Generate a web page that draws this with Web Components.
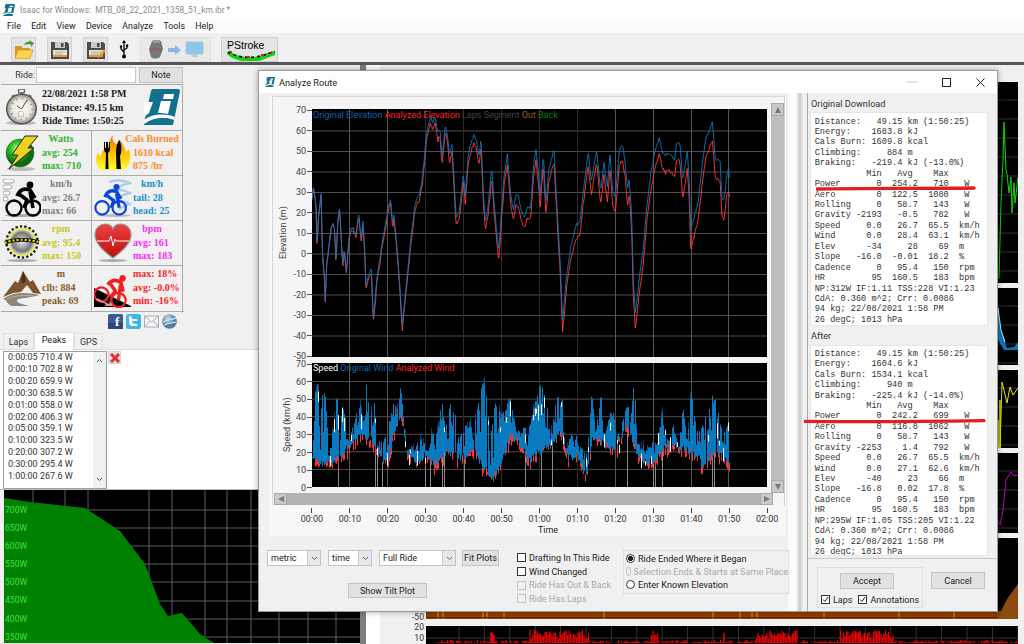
<!DOCTYPE html>
<html>
<head>
<meta charset="utf-8">
<title>Isaac for Windows</title>
<style>
  html, body { margin: 0; padding: 0; background: #f0f0f0; }
</style>
</head>
<body>
<isaac-app></isaac-app>
<script>
const rng = (seed) => () => (seed = (seed * 16807) % 2147483647) / 2147483647;

function lerpTable(pts, x) {
  for (let i = 1; i < pts.length; i++) {
    if (x <= pts[i][0]) {
      const a = pts[i - 1], b = pts[i];
      return a[1] + (b[1] - a[1]) * (x - a[0]) / ((b[0] - a[0]) || 1);
    }
  }
  return pts[pts.length - 1][1];
}

const LOGO = (w, h) => `<svg width="${w}" height="${h}" viewBox="0 0 36 36">
  <path d="M9 0H34Q36 0 36 2L29 36H1Q-1 36 0 34L7 2Q7.5 0 9 0Z" fill="#13708f"/>
  <path d="M20 5H30L29 10H19Z" fill="#fff"/>
  <path d="M17 12H27L24 25C21 24 18 24 14 24Z" fill="#fff"/>
  <path d="M0 31C8 25 20 24 31 28L30 31C20 27 10 28 0 35Z" fill="#fff"/>
  <path d="M0 13H9L5 24L0 28Z" fill="#fff"/>
</svg>`;

class TitleBar extends HTMLElement {
  constructor() {
    super();
    this.attachShadow({ mode: 'open' });
    this.shadowRoot.innerHTML = `
      <style>
        :host { display: flex; align-items: center; height: 19px; background: #fff; padding-left: 3px; }
        span { margin-left: 5px; font-size: 8.4px; color: #8a8a8a; white-space: pre; }
      </style>
      ${LOGO(12, 12)}<span>Isaac for Windows:  MTB_08_22_2021_1358_51_km.ibr *</span>
    `;
  }
}
customElements.define('title-bar', TitleBar);

class MenuBar extends HTMLElement {
  constructor() {
    super();
    this.attachShadow({ mode: 'open' });
    const items = ['File', 'Edit', 'View', 'Device', 'Analyze', 'Tools', 'Help'];
    this.shadowRoot.innerHTML = `
      <style>
        :host { display: flex; height: 14px; background: #fbfbfb; padding-left: 7px; gap: 10.4px; align-items: center; font-size: 8.8px; color: #222; }
      </style>
      ${items.map(i => `<span>${i}</span>`).join('')}
    `;
  }
}
customElements.define('menu-bar', MenuBar);

class ToolBar extends HTMLElement {
  constructor() {
    super();
    this.attachShadow({ mode: 'open' });
    const floppy = (extra) => `<svg width="20" height="20" viewBox="0 0 20 20">
      <path d="M1 2H17L19 4V19H1Z" fill="#4a4a4a"/>
      <rect x="5" y="2" width="10" height="6" fill="#c8c8c8"/><rect x="11" y="3" width="2.5" height="4" fill="#4a4a4a"/>
      <rect x="3" y="10" width="14" height="7" fill="#efe6d6"/><rect x="3" y="15" width="14" height="2" fill="#e8983a"/>
      <path d="M5 12H15M5 14H13" stroke="#999" stroke-width=".8"/>${extra}</svg>`;
    this.shadowRoot.innerHTML = `
      <style>
        :host { display: flex; align-items: flex-end; height: 29px; background: #f0f0f0; padding-left: 11px; box-sizing: border-box; }
        .b { width: 25px; height: 25px; box-sizing: border-box; background: #e4e4e4; border: 1px solid #d2d2d2; display: flex; align-items: center; justify-content: center; }
        .b + .b { margin-left: 11px; }
        .usb { width: 32px; height: 25px; display: flex; align-items: center; justify-content: center; }
        .dev { width: 71px; height: 25px; box-sizing: border-box; background: #e9e9e9; border: 1px solid #dedede; display: flex; align-items: center; justify-content: center; gap: 4px; }
        .ps { width: 57px; height: 25px; margin-left: 10px; box-sizing: border-box; background: #e4e4e4; border: 1px solid #cfcfcf; padding: 2px 0 0 5px; font: 10.5px/11px "Liberation Sans", sans-serif; color: #000; overflow: hidden; }
        .ps svg { display: block; margin-top: -1px; }
      </style>
      <div class="b"><svg width="20" height="20" viewBox="0 0 20 20">
        <path d="M1 6H7L9 8H16V18H1Z" fill="#d89a1e"/><path d="M4 10H19L16 18.5H1Z" fill="#ffd34e" stroke="#c98f1c" stroke-width=".6"/>
        <path d="M10 5C11 2 14 1 16 2L15 0L20 3L17 7V4.5C14 4 12 4 10 5Z" fill="#3d9b3d"/>
      </svg></div>
      <div class="b">${floppy('')}</div>
      <div class="b">${floppy('<path d="M11 17L18 9L20 11L13 18Z" fill="#e8983a"/>')}</div>
      <div class="usb"><svg width="10" height="19" viewBox="0 0 10 19">
        <path d="M5 2V16M5 12L2 9V7M5 10L8 8V6" stroke="#000" stroke-width="1.3" fill="none"/>
        <path d="M5 0L7 3H3Z" fill="#000"/><circle cx="5" cy="16.5" r="2" fill="#000"/><circle cx="2" cy="6.5" r="1.2" fill="#000"/><rect x="7" y="4.5" width="2.2" height="2.2" fill="#000"/>
      </svg></div>
      <div class="dev">
        <svg width="16" height="20" viewBox="0 0 16 20"><path d="M4 1H13L15 9L12 17C9 19 5 19 3 17L1 9Z" fill="#777"/><path d="M3 9H13" stroke="#a05050" stroke-width="1"/><rect x="5" y="0" width="7" height="3" fill="#999"/></svg>
        <svg width="13" height="10" viewBox="0 0 13 10"><path d="M0 3H7V0L13 5L7 10V7H0Z" fill="#8db4e2"/></svg>
        <svg width="19" height="18" viewBox="0 0 19 18"><rect x="1" y="1" width="17" height="12" rx="1" fill="#8cc6ea" stroke="#a9c4d8"/><path d="M7 13H12L13 16H6Z" fill="#b8cfe0"/></svg>
      </div>
      <div class="ps">PStroke
        <svg width="49" height="11" viewBox="0 0 49 11"><path d="M1 2C8 9 22 11 34 8C40 6 45 3 48 3" stroke="#18d018" stroke-width="4.5" fill="none"/><path d="M1 2C8 7 22 9 34 6C40 4 45 2 48 2" stroke="#111" stroke-width="1.8" stroke-dasharray="3 3" fill="none"/><path d="M3 2h2M20 7h3M34 5h3M43 3h2" stroke="#e02020" stroke-width="2"/></svg>
      </div>
    `;
  }
}
customElements.define('tool-bar', ToolBar);

class WinButton extends HTMLElement {
  constructor() {
    super();
    this.attachShadow({ mode: 'open' });
    this.shadowRoot.innerHTML = `
      <style>
        :host { display: flex; align-items: center; justify-content: center; box-sizing: border-box; background: #e1e1e1; border: 1px solid #c4c4c4; font-size: 9px; color: #222; white-space: nowrap; }
      </style>
      <slot></slot>
    `;
  }
}
customElements.define('win-button', WinButton);

class WinSelect extends HTMLElement {
  constructor() {
    super();
    this.attachShadow({ mode: 'open' });
    this.shadowRoot.innerHTML = `
      <style>
        :host { display: flex; align-items: center; box-sizing: border-box; height: 16px; background: #fff; border: 1px solid #c4c4c4; font-size: 9px; color: #222; padding-left: 3px; }
        span { flex: 1; }
        i { width: 12px; height: 14px; background: #e8e8e8; border-left: 1px solid #ccc; display: flex; align-items: center; justify-content: center; }
      </style>
      <span><slot></slot></span>
      <i><svg width="7" height="5" viewBox="0 0 7 5"><path d="M1 1L3.5 3.5L6 1" stroke="#666" fill="none"/></svg></i>
    `;
  }
}
customElements.define('win-select', WinSelect);

class WinCheck extends HTMLElement {
  constructor() {
    super();
    this.attachShadow({ mode: 'open' });
    const dis = this.hasAttribute('disabled');
    const on = this.hasAttribute('checked');
    this.shadowRoot.innerHTML = `
      <style>
        :host { display: flex; align-items: center; height: 13.7px; font-size: 9px; color: ${dis ? '#a8a8a8' : '#222'}; white-space: nowrap; gap: 3px; }
        b { width: 9px; height: 9px; box-sizing: border-box; border: 1px solid ${dis ? '#c2c2c2' : '#333'}; background: ${dis ? '#f0f0f0' : '#fff'}; display: block; }
        svg { display: block; }
      </style>
      <b>${on ? '<svg width="7" height="7" viewBox="0 0 7 7"><path d="M1 3.5L3 5.5L6 1" stroke="#222" fill="none"/></svg>' : ''}</b><span><slot></slot></span>
    `;
  }
}
customElements.define('win-check', WinCheck);

class WinRadio extends HTMLElement {
  constructor() {
    super();
    this.attachShadow({ mode: 'open' });
    const dis = this.hasAttribute('disabled');
    const on = this.hasAttribute('checked');
    this.shadowRoot.innerHTML = `
      <style>
        :host { display: flex; align-items: center; height: 13px; font-size: 9.1px; color: ${dis ? '#a8a8a8' : '#222'}; white-space: nowrap; gap: 3px; }
        b { width: 9px; height: 9px; box-sizing: border-box; border: 1px solid ${dis ? '#c2c2c2' : '#333'}; border-radius: 50%; background: ${on ? 'radial-gradient(circle,#222 0 2.3px,#fff 2.8px)' : dis ? '#f0f0f0' : '#fff'}; display: block; }
      </style>
      <b></b><span><slot></slot></span>
    `;
  }
}
customElements.define('win-radio', WinRadio);

// cell of the ride stats table
class StatCell extends HTMLElement {
  constructor() {
    super();
    this.attachShadow({ mode: 'open' });
    const heading = this.getAttribute('heading');
    const lines = (this.getAttribute('lines') || '').split('|');
    this.shadowRoot.innerHTML = `
      <style>
        :host { display: flex; box-sizing: border-box; border-top: 1px solid #ababab; border-right: 1px solid #ababab; font: bold 10px/13.5px "Liberation Serif", serif; color: ${this.getAttribute('color')}; white-space: nowrap; overflow: hidden; }
        .ic { width: 41px; flex: none; display: flex; align-items: center; justify-content: center; }
        .tx { width: 38px; flex: none; padding-top: 1px; }
        .h { display: flex; justify-content: center; }
      </style>
      <div class="ic"><slot></slot></div>
      <div class="tx">
        ${heading ? `<div class="h"><span>${heading}</span></div>` : ''}
        ${lines.map(l => `<div>${l}</div>`).join('')}
      </div>
    `;
  }
}
customElements.define('stat-cell', StatCell);

const cyclist = (col) => `
  <circle cx="9" cy="29" r="7.5" fill="none" stroke="${col}" stroke-width="2.4"/>
  <circle cx="28" cy="29" r="7.5" fill="none" stroke="${col}" stroke-width="2.4"/>
  <circle cx="25" cy="6" r="3.4" fill="${col}"/>
  <path d="M12 17C15 10 20 9 25 11L30 19M14 15L22 21L19 29M25 13L28 29" stroke="${col}" stroke-width="3.6" fill="none" stroke-linejoin="round"/>`;

class StatPanel extends HTMLElement {
  constructor() {
    super();
    this.attachShadow({ mode: 'open' });
    this.shadowRoot.innerHTML = `
      <style>
        :host { display: grid; grid-template-columns: 91px 91px; grid-template-rows: 46px 45px 45px 45px 46px; width: 183px; margin-left: 1px; border-bottom: 1px solid #ababab; box-sizing: border-box; height: 228px; }
        .top { grid-column: 1 / 3; display: flex; border-top: 1px solid #ababab; border-right: 1px solid #ababab; font: bold 10px/13.5px "Liberation Serif", serif; color: #1c1c1c; white-space: nowrap; }
        .sw { width: 41px; display: flex; align-items: center; justify-content: center; }
        .txt { width: 102px; padding-top: 2px; }
        .lg { padding-top: 4px; }
      </style>
      <div class="top">
        <div class="sw"><svg width="37" height="37" viewBox="0 0 37 37">
          <defs><radialGradient id="face"><stop offset="0" stop-color="#fff"/><stop offset=".8" stop-color="#e8e4d8"/><stop offset="1" stop-color="#b9b4a4"/></radialGradient></defs>
          <ellipse cx="18" cy="34" rx="15" ry="2" fill="#bbb"/>
          <rect x="15.5" y="0" width="6" height="4" rx="1.5" fill="none" stroke="#666" stroke-width="1.4"/><rect x="17" y="3" width="3" height="4" fill="#777"/>
          <path d="M8 7L11 5L13 8L10 10Z" fill="#888"/><path d="M29 7L26 5L24 8L27 10Z" fill="#888"/>
          <circle cx="18.5" cy="20" r="15.5" fill="#555"/><circle cx="18.5" cy="20" r="14" fill="#aaa"/><circle cx="18.5" cy="20" r="12.5" fill="url(#face)"/>
          <circle cx="18.5" cy="20" r="10.5" fill="none" stroke="#555" stroke-width="1.4" stroke-dasharray=".8 4.7"/>
          <circle cx="18" cy="25" r="3" fill="none" stroke="#888" stroke-width=".5"/>
          <path d="M18.5 20L24 11M18.5 20L14 17" stroke="#333" stroke-width=".9"/>
        </svg></div>
        <div class="txt"><div>22/08/2021 1:58 PM</div><div>Distance: 49.15 km</div><div>Ride Time: 1:50:25</div></div>
        <div class="lg">${LOGO(36, 36)}</div>
      </div>

      <stat-cell color="#2db52d" heading="Watts" lines="avg: 254|max: 710">
        <svg width="35" height="38" viewBox="0 0 35 38">
          <defs><radialGradient id="gb" cx=".4" cy=".35"><stop offset="0" stop-color="#c8f8a8"/><stop offset=".45" stop-color="#38c828"/><stop offset="1" stop-color="#0d6a12"/></radialGradient></defs>
          <ellipse cx="17" cy="35" rx="14" ry="2" fill="#bbb"/>
          <circle cx="16" cy="19" r="14" fill="url(#gb)" stroke="#1a7a1a" stroke-width=".5"/>
          <path d="M21 2H34L24 14H30L5 35L14 21H8Z" fill="#f0d020" stroke="#222" stroke-width="1"/>
        </svg>
      </stat-cell>
      <stat-cell color="#ff8a2c" heading="Cals Burned" lines="1610 kcal|875 /hr">
        <svg width="36" height="38" viewBox="0 0 36 38">
          <defs><linearGradient id="fl" x1="0" y1="0" x2="0" y2="1"><stop offset="0" stop-color="#f06a10"/><stop offset=".5" stop-color="#ffc000"/><stop offset="1" stop-color="#ffff30"/></linearGradient></defs>
          <path d="M18 1C16 7 20 9 23 11C25 8 24 5 24 5C29 10 30 16 31 18C33 17 34 15 34 15C36 24 36 32 28 36H7C0 33 0 24 3 19C4 22 6 22 6 22C7 15 12 13 14 10C15 6 16 3 18 1Z" fill="url(#fl)"/>
          <path d="M9 8V15C9 17 10 18 11 19L10.5 35H13.5L13 19C14 18 15 17 15 15V8H14V14H13V8H11V14H10V8Z" fill="#000"/>
          <path d="M24 6C27 10 27 18 25 22L26 35H21.5L21 18C21 14 22 9 24 6Z" fill="#000"/>
        </svg>
      </stat-cell>

      <stat-cell color="#808080" heading="km/h" lines="avg: 26.7|max: 66">
        <svg width="38" height="38" viewBox="0 0 38 38">
          <g fill="#fff" stroke="#8a8a8a" stroke-width=".8"><rect x="0" y="0" width="11" height="4" rx="2"/><rect x="0" y="6" width="9" height="4" rx="2"/><rect x="0" y="12" width="7" height="4" rx="2"/><rect x="0" y="18" width="5" height="4" rx="2"/></g>
          <ellipse cx="19" cy="36.5" rx="17" ry="1.5" fill="#aaa"/>
          <g transform="translate(2 0)">${cyclist('#000')}</g>
        </svg>
      </stat-cell>
      <stat-cell color="#2090d0" heading="km/h" lines="tail: 28|head: 25">
        <svg width="38" height="38" viewBox="0 0 38 38">
          <g fill="none" stroke="#a8cdee" stroke-width="2.4"><path d="M15 3C22 0 29 1 36 4C30 5 26 7 24 10"/><path d="M19 13C25 10 31 11 36 14C31 15 27 17 24 19"/><path d="M19 24C25 22 31 22 36 25C31 27 27 28 25 31"/></g>
          <ellipse cx="20" cy="36.5" rx="17" ry="1.5" fill="#bbb"/>
          <g transform="scale(.9) translate(0 3)">${cyclist('#0a46d8')}</g>
        </svg>
      </stat-cell>

      <stat-cell color="#c8c820" heading="rpm" lines="avg: 95.4|max: 150">
        <svg width="36" height="40" viewBox="0 0 36 40">
          <defs><radialGradient id="cr"><stop offset="0" stop-color="#e8e8e8"/><stop offset=".7" stop-color="#777"/><stop offset="1" stop-color="#eee"/></radialGradient></defs>
          <ellipse cx="18" cy="37.5" rx="15" ry="1.5" fill="#aaa"/>
          <circle cx="18" cy="19" r="15.5" fill="none" stroke="#222" stroke-width="2.6" stroke-dasharray="2.4 2"/>
          <circle cx="18" cy="19" r="13.5" fill="url(#cr)" stroke="#e8e850" stroke-width="1.8"/>
          <path d="M1 20C8 16 24 16 35 19" stroke="#111" stroke-width="3.6" fill="none"/>
          <path d="M1 20C8 16 24 16 35 19" stroke="#f6f010" stroke-width="2" stroke-dasharray="2 2" fill="none"/>
        </svg>
      </stat-cell>
      <stat-cell color="#ff28ff" heading="bpm" lines="avg: 161|max: 183">
        <svg width="38" height="40" viewBox="0 0 38 40">
          <defs><linearGradient id="ht" x1="0" y1="0" x2="0" y2="1"><stop offset="0" stop-color="#f04040"/><stop offset="1" stop-color="#b81010"/></linearGradient></defs>
          <ellipse cx="19" cy="37.5" rx="14" ry="1.5" fill="#aaa"/>
          <path d="M19 35C8 27 1 20 1 12C1 5 6 1 11 1C15 1 18 3 19 6C20 3 23 1 27 1C32 1 37 5 37 12C37 20 30 27 19 35Z" fill="url(#ht)" stroke="#999" stroke-width="1.2"/>
          <path d="M3 18H15L17 13L19 23L21 16L22 18H35" stroke="#fff" stroke-width="1" fill="none"/>
        </svg>
      </stat-cell>

      <stat-cell color="#8a5a2a" heading="m" lines="clb: 884|peak: 69">
        <svg width="38" height="38" viewBox="0 0 38 38">
          <path d="M0 27L12 11L15 13L20 1L27 12L30 10L38 24L30 23L24 15L18 22L10 23Z" fill="#7c5530"/>
          <path d="M20 1L23 10L20 14L18 10Z" fill="#4b3015"/>
          <path d="M0 29C10 22 22 22 36 25C28 28 16 28 14 30C13 33 20 34 26 36H9C3 34 5 30 0 29Z" fill="#8f8578"/>
          <path d="M4 29C12 25 22 25 30 26" stroke="#ddd" stroke-width=".5" fill="none"/>
        </svg>
      </stat-cell>
      <stat-cell color="#ff2222" lines="max: 18%|avg: -0.0%|min: -16%">
        <svg width="37" height="38" viewBox="0 0 37 38">
          <path d="M0 18L37 36V37H0Z" fill="#000"/>
          <g transform="translate(1 0) scale(.95)"><g transform="rotate(18 18 20)">${cyclist('#f02020')}</g></g>
          <path d="M3 28L15 34L16 31L19 36H11L12 34L2 30Z" fill="#e89090"/>
        </svg>
      </stat-cell>
    `;
  }
}
customElements.define('stat-panel', StatPanel);

class SocialRow extends HTMLElement {
  constructor() {
    super();
    this.attachShadow({ mode: 'open' });
    this.shadowRoot.innerHTML = `
      <style>
        :host { display: flex; gap: 3px; height: 19px; padding: 2px 0 0 108px; box-sizing: border-box; }
        svg { display: block; }
        text { font: bold 13px/13px "Liberation Serif", serif; fill: #fff; }
      </style>
      <svg width="15" height="15" viewBox="0 0 15 15"><rect width="15" height="15" rx="1.5" fill="#3b5a9a"/><rect y="9" width="15" height="6" fill="#2c4680"/><text x="7" y="12">f</text></svg>
      <svg width="15" height="15" viewBox="0 0 15 15"><rect width="15" height="15" rx="2.5" fill="#3eb6e6"/><path d="M4 2C5 2 6 3 6 5H10C12 5 12 7 10 7H6C6 9 7 10 10 10C12 10 12 12 10 12H7C4 12 3 10 3 7V3C3 2.5 3.5 2 4 2Z" fill="#fff"/></svg>
      <svg width="15" height="15" viewBox="0 0 15 15"><rect x=".5" y="2" width="14" height="11" fill="#f4f4f4" stroke="#aab"/><path d="M.5 2L7.5 8L14.5 2M.5 13L5.5 7M14.5 13L9.5 7" stroke="#aab" fill="none"/></svg>
      <svg width="15" height="15" viewBox="0 0 15 15"><defs><radialGradient id="gl" cx=".4" cy=".3"><stop offset="0" stop-color="#c8dcec"/><stop offset="1" stop-color="#4a7fa8"/></radialGradient></defs><circle cx="7.5" cy="7.5" r="7.3" fill="url(#gl)"/><path d="M1 8C4 6 9 6 14 4M2 11C6 9 10 9 14 8" stroke="#e4eef6" fill="none"/></svg>
    `;
  }
}
customElements.define('social-row', SocialRow);

class PeakTabs extends HTMLElement {
  constructor() {
    super();
    this.attachShadow({ mode: 'open' });
    this.shadowRoot.innerHTML = `
      <style>
        :host { display: flex; height: 19px; align-items: flex-end; padding-left: 3px; font-size: 9px; color: #333; border-bottom: 1px solid #dcdcdc; box-sizing: border-box; }
        div { height: 16px; display: flex; align-items: center; justify-content: center; border: 1px solid #e0e0e0; border-bottom: 0; box-sizing: border-box; }
        .on { height: 18px; background: #fff; margin-bottom: -1px; padding-bottom: 3px; color: #222; }
      </style>
      <div style="width:31px">Laps</div><div class="on" style="width:40px">Peaks</div><div style="width:29px">GPS</div>
    `;
  }
}
customElements.define('peak-tabs', PeakTabs);

class PeakList extends HTMLElement {
  constructor() {
    super();
    this.attachShadow({ mode: 'open' });
    const rows = ['0:00:05 710.4 W', '0:00:10 702.8 W', '0:00:20 659.9 W', '0:00:30 638.5 W', '0:01:00 558.0 W', '0:02:00 406.3 W', '0:05:00 359.1 W', '0:10:00 323.5 W', '0:20:00 307.2 W', '0:30:00 295.4 W', '1:00:00 267.6 W'];
    this.shadowRoot.innerHTML = `
      <style>
        :host { display: flex; height: 140px; background: #fff; padding: 1px 0 0 3px; box-sizing: border-box; border-bottom: 1px solid #bdbdbd; }
        .box { width: 104px; height: 138px; box-sizing: border-box; border: 1px solid #9a9fa6; display: flex; }
        .rows { flex: 1; padding: 0 0 0 4px; font-size: 9px; line-height: 11.9px; color: #333; white-space: nowrap; }
        .bar { width: 13px; background: #f0f0f0; display: flex; flex-direction: column; justify-content: space-between; align-items: center; padding: 6px 0; box-sizing: border-box; }
        .x { width: 13px; height: 13px; margin-left: 1px; background: #e4e4e4; border: 1px solid #d4d4d4; box-sizing: border-box; display: flex; align-items: center; justify-content: center; }
        svg { display: block; }
      </style>
      <div class="box">
        <div class="rows">${rows.map(r => `<div>${r}</div>`).join('')}</div>
        <div class="bar">
          <svg width="7" height="5" viewBox="0 0 7 5"><path d="M1 4L3.5 1.5L6 4" stroke="#555" fill="none"/></svg>
          <svg width="7" height="5" viewBox="0 0 7 5"><path d="M1 1L3.5 3.5L6 1" stroke="#555" fill="none"/></svg>
        </div>
      </div>
      <div class="x"><svg width="10" height="10" viewBox="0 0 10 10"><path d="M1 1L9 9M9 1L1 9" stroke="#e03030" stroke-width="3"/></svg></div>
    `;
  }
}
customElements.define('peak-list', PeakList);

class PeakPlot extends HTMLElement {
  constructor() {
    super();
    this.attachShadow({ mode: 'open' });
    const labels = ['700W', '650W', '600W', '550W', '500W', '450W', '400W', '350W'];
    const hy = [20, 38, 56, 74, 92, 111, 129, 147];
    const vx = [29, 61, 84, 145, 168, 201, 223, 247, 275, 304, 332];
    this.shadowRoot.innerHTML = `
      <style>
        :host { display: block; position: relative; margin-left: 4px; height: 153px; background: #000; overflow: hidden; }
        svg { display: block; position: absolute; left: 0; top: 0; }
        .y { position: absolute; left: 1px; top: 11px; font-size: 8.6px; line-height: 18.1px; color: #3fe03f; }
      </style>
      <svg width="356" height="153" viewBox="0 0 356 153">
        <path d="${hy.map(y => `M0 ${y}H356`).join('')}" stroke="#5c5c5c"/>
        <path d="${vx.map(x => `M${x} 0V153`).join('')}" stroke="#5c5c5c"/>
        <path d="M0 8L26 12L81 18L116 41L141 74L156 114L164 126L178 123L196 144L210 153H0Z" fill="#008000"/>
      </svg>
      <div class="y">${labels.map(l => `<div>${l}</div>`).join('')}</div>
    `;
  }
}
customElements.define('peak-plot', PeakPlot);

class LeftPane extends HTMLElement {
  constructor() {
    super();
    this.attachShadow({ mode: 'open' });
    this.shadowRoot.innerHTML = `
      <style>
        :host { display: flex; flex-direction: column; width: 360px; flex: none; }
        .ride { display: flex; height: 19px; align-items: center; width: 183px; font-size: 9px; color: #333; }
        .ride span { width: 35px; text-align: right; margin-right: 1px; }
        .ride i { display: block; width: 100px; height: 16px; background: #fff; border: 1px solid #c8c8c8; box-sizing: border-box; }
        .ride win-button { width: 44px; height: 16px; margin-left: 3px; }
      </style>
      <div class="ride"><span>Ride:</span><i></i><win-button>Note</win-button></div>
      <stat-panel></stat-panel>
      <social-row></social-row>
      <peak-tabs></peak-tabs>
      <peak-list></peak-list>
      <peak-plot></peak-plot>
    `;
  }
}
customElements.define('left-pane', LeftPane);

// main window plots, most of them hidden behind the dialog
class BackPlots extends HTMLElement {
  constructor() {
    super();
    this.attachShadow({ mode: 'open' });
    const strip = (top, h, body) => {
      let grid = '';
      for (let y = top + 18; y < top + h; y += 19) grid += `M432 ${y}H1024`;
      return `<div class="row" style="height:${h}px">
        <div class="gut"></div>
        <svg width="592" height="${h}" viewBox="432 ${top} 592 ${h}"><rect x="432" y="${top}" width="592" height="${h}" fill="#000"/><path d="${grid}" stroke="#303030"/>${body}</svg>
      </div>`;
    };
    const r = rng(77);
    let red = '';
    for (let x = 440; x < 1024; x += 1.5) {
      const burst = Math.sin(x / 17) + Math.sin(x / 41) > 0.5;
      const h = burst ? 4 + r() * 9 : r() * 3;
      red += `M${x.toFixed(1)} 644V${(644 - h).toFixed(1)}`;
    }
    let vg = '';
    for (let x = 465; x < 1024; x += 25.4) vg += `M${x.toFixed(1)} 627V644`;
    const flecks = [444, 449, 489, 493, 510, 610, 719, 746, 758, 763, 830, 905, 960];
    this.shadowRoot.innerHTML = `
      <style>
        :host { display: flex; flex-direction: column; flex: 1; padding-top: 17px; box-sizing: border-box; border-left: 6px solid #7e7e7e; overflow: hidden; background: linear-gradient(90deg,#fff 14px,#f0f0f0 14px); font-size: 8.6px; color: #333; }
        .row { display: flex; flex: none; margin-bottom: 5px; }
        .row:last-child { margin-bottom: 0; }
        .gut { width: 60px; flex: none; position: relative; }
        .gut span { position: absolute; right: 2px; line-height: 10px; }
        svg { display: block; flex: none; }
      </style>
      ${strip(82, 201, `<path d="M997 278H1000L1001 263L1003 278H1005L1007 203L1009 160L1010 122L1012 170L1013 174L1015 193L1017 177L1018 213L1020 183L1021 203L1024 177" stroke="#00e000" fill="none"/>`)}
      ${strip(288, 77, `<path d="M998 330L1000 327L1004 308L1007 330L1011 342L1013 348L1020 347L1024 342V350H1010Z" fill="#0a76b8"/><path d="M1000 327L1004 308L1007 330L1011 342" stroke="#cfe6f5" fill="none"/>`)}
      ${strip(370, 78, `<path d="M1000 390L1002 448H1006L1008 382L1013 403L1016 387L1019 395L1024 388" stroke="#e8e800" fill="none"/><path d="M1000 448V392M1002 448V410M1004 448V420M1006 448V400" stroke="#e8e800" stroke-width="1.5"/>`)}
      ${strip(453, 80, `<path d="M998 520L1001 525L1003 519L1006 525L1009 510L1012 480L1017 472L1020 476L1024 475" stroke="#c000c0" fill="none"/>`)}
      <div class="row" style="height:81px;margin-bottom:7px">
        <div class="gut"><span style="bottom:-3px">-50</span></div>
        <svg width="592" height="81" viewBox="432 539 592 81">
          <rect x="432" y="539" width="592" height="81" fill="#000"/>
          <rect x="432" y="612" width="592" height="8" fill="#8f3e00"/>
          <path d="${flecks.map(x => `M${x} 612V620`).join('')}" stroke="#ff9a18"/>
          <path d="M432 618.5H1024" stroke="#6a2400"/>
          <path d="M997 585L1000 593L1003 612H997Z" fill="#e07010"/>
          <path d="M1003 620L1013 600L1024 585V620Z" fill="#8a4a10"/>
        </svg>
      </div>
      <div class="row" style="height:40px">
        <div class="gut"><span style="top:-4px">20</span><span style="top:7px">10</span></div>
        <svg width="592" height="40" viewBox="432 627 592 40">
          <rect x="432" y="627" width="592" height="40" fill="#000"/>
          <path d="${vg}" stroke="#333"/>
          <path d="M432 639H1024" stroke="#333"/>
          <path d="${red}" stroke="#f00000" stroke-width="1.2"/>
          <path d="M497 644V633M498.5 644V634M500 644V636M866 644V632M730 644V634" stroke="#f00000" stroke-width="1.5"/>
        </svg>
      </div>
    `;
  }
}
customElements.define('back-plots', BackPlots);

// traced outline of the route profile, in screen pixels
const ELEV_A = [[36,290],[40,258],[45,285],[50,340],[51,455],[55,350],[60,310],[63,262],[65,350],[68,470],[73,520],[76,598],[80,490],[86,440],[92,390],[98,365],[104,380],[108,490],[113,360],[119,315],[122,380],[128,490],[133,445],[139,510],[146,420],[151,385],[160,382],[168,405],[176,335],[184,420],[189,355],[195,470],[198,560],[205,525],[214,500],[220,655],[232,520],[240,470],[248,415],[256,370],[265,320],[272,290],[278,370],[282,340],[292,450],[300,560],[307,670],[318,560],[326,480],[334,400],[345,310],[360,270],[368,225],[380,95],[388,60],[392,45],[398,70],[405,45],[413,95],[420,85],[426,170],[436,72],[442,100],[448,160],[456,130],[462,230],[468,350],[478,330],[490,220],[496,280],[505,160],[512,130],[522,100],[530,120],[537,170],[543,110],[550,280],[556,360],[564,320],[575,200],[583,310],[590,390],[596,450],[603,350],[612,230],[622,160],[632,280],[640,330],[648,280],[655,285],[664,330],[674,350],[682,320],[692,320],[700,200]].map(p => [300 + p[0] / 3, 100 + p[1] / 3]);
const ELEV_B = [[10,200],[18,145],[26,220],[30,290],[40,160],[48,310],[56,210],[72,145],[80,300],[90,470],[98,660],[110,520],[122,440],[136,380],[150,360],[160,270],[175,150],[184,240],[200,145],[212,270],[222,180],[232,260],[240,155],[248,270],[256,290],[268,150],[277,130],[285,180],[292,260],[298,240],[305,340],[310,540],[316,640],[328,530],[340,440],[350,320],[362,220],[378,140],[388,110],[396,150],[408,165],[416,155],[434,175],[440,125],[450,130],[458,240],[472,150],[478,250],[482,390],[490,360],[505,300],[518,180],[528,110],[538,90],[547,60],[556,170],[558,175],[570,180],[576,290],[582,300],[590,225],[596,205],[598,230]].map(p => [530 + p[0] / 3, 100 + p[1] / 3]);

class ElevationPlot extends HTMLElement {
  constructor() {
    super();
    this.attachShadow({ mode: 'open' });
    const pts = ELEV_A.concat(ELEV_B);
    const r = rng(4242);
    let blue = '', red = '';
    for (let x = 312; x < 730; x += 0.7) {
      const y = lerpTable(pts, x);
      const off = 1 + (x - 312) * 0.045;
      const jag = r() < 0.12 ? 5 : 2;
      const by = y + (r() - 0.5) * jag;
      const ry = y + off + (r() - 0.5) * jag * 1.3;
      blue += `${blue ? 'L' : 'M'}${(x - 312).toFixed(1)} ${(by - 108).toFixed(1)}`;
      red += `${red ? 'L' : 'M'}${(x - 312).toFixed(1)} ${(ry - 108).toFixed(1)}`;
    }
    let h = '';
    for (let i = 1; i < 12; i++) h += `M0 ${(i * 20.5 + 1.5).toFixed(1)}H455`;
    let v = '', vd = '';
    for (let i = 1; i < 12; i++) {
      const x = Math.round(i * 37.95) - 0.5;
      if (i > 2 && i < 8) vd += `M${x} 0V248`; else v += `M${x} 0V248`;
    }
    this.shadowRoot.innerHTML = `
      <style>
        :host { display: block; position: relative; width: 455px; height: 248px; background: #000; font-size: 9px; }
        svg { display: block; }
        .leg { position: absolute; left: 1px; top: 1px; white-space: pre; }
      </style>
      <svg width="455" height="248" viewBox="0 0 455 248">
        <path d="${h}" stroke="#505050"/><path d="${v}" stroke="#555"/><path d="${vd}" stroke="#2c2c2c"/>
        <path d="${red}" stroke="#ff3a3a" fill="none" stroke-width=".9"/>
        <path d="${blue}" stroke="#0a78bc" fill="none" stroke-width=".9"/>
      </svg>
      <div class="leg"><span style="color:#0768ad">Original Elevation</span> <span style="color:#ff2222">Analyzed Elevation</span> <span style="color:#444">Laps Segment</span> <span style="color:#a85800">Out</span> <span style="color:#008000">Back</span></div>
    `;
  }
}
customElements.define('elevation-plot', ElevationPlot);

const WIND_A = [[157,300],[165,120],[172,90],[180,200],[188,90],[195,100],[205,310],[215,240],[230,120],[238,260],[245,150],[255,200],[265,270],[280,210],[298,150],[310,210],[318,100],[330,200],[340,125],[350,260],[365,270],[380,240],[398,155],[410,160],[422,100],[430,200],[440,280],[460,290],[480,240],[500,300],[515,240],[530,230],[545,150],[555,230],[568,160],[580,150],[595,250],[618,210],[640,220],[668,80],[678,120],[690,260],[705,140],[720,190],[750,140],[770,240],[800,220]].map(p => [260 + p[0] / 3, 350 + p[1] / 3]);
const WIND_B = [[0,210],[30,90],[48,130],[60,250],[80,130],[98,140],[105,290],[130,230],[150,280],[170,310],[185,105],[195,240],[212,125],[225,240],[245,165],[265,250],[290,155],[300,170],[312,80],[320,260],[345,290],[365,270],[380,265],[397,175],[412,260],[428,210],[445,290],[458,160],[470,270],[482,115],[500,240],[520,215],[545,130],[558,140],[575,240],[597,200],[600,300]].map(p => [530 + p[0] / 3, 350 + p[1] / 3]);
// lower edge of the blue band
const FLOOR_A = [[157,330],[200,340],[240,320],[270,280],[300,250],[330,260],[360,320],[385,340],[400,240],[425,200],[440,310],[470,340],[490,310],[520,340],[560,300],[600,320],[640,300],[695,390],[720,340],[750,250],[780,280],[800,320]].map(p => [260 + p[0] / 3, 350 + p[1] / 3]);
const FLOOR_B = [[0,330],[30,300],[60,290],[90,240],[110,320],[140,320],[170,370],[185,260],[220,280],[260,290],[290,220],[320,310],[350,340],[380,320],[400,290],[430,280],[470,300],[500,310],[520,350],[550,300],[580,310],[600,350]].map(p => [530 + p[0] / 3, 350 + p[1] / 3]);

class WindPlot extends HTMLElement {
  constructor() {
    super();
    this.attachShadow({ mode: 'open' });
    const env = WIND_A.concat(WIND_B);
    const low = FLOOR_A.concat(FLOOR_B);
    const r = rng(991);
    let blue = '', red = '', white = '', dark = '', spike = '';
    for (let x = 312; x < 730; x += 1) {
      const top = lerpTable(env, x);
      const floor = lerpTable(low, x) + (r() - 0.5) * 8;
      const px = x - 312 + 0.5;
      if (r() > 0.08) {
        const yt = top + (r() < 0.5 ? r() * 6 : (floor - top) * r() * 0.7);
        blue += `M${px} ${(yt - 362).toFixed(1)}V${(floor - 362).toFixed(1)}`;
        if (r() < 0.1) white += `M${px} ${(yt - 362 + r() * 10).toFixed(1)}v${(3 + r() * 12).toFixed(1)}`;
        if (r() < 0.12) spike += `M${px} ${(yt - 368).toFixed(1)}v8`;
      }
      if (r() < 0.5) red += `M${px} ${(floor - 362).toFixed(1)}v${(2 + r() * 7).toFixed(1)}`;
      if (r() < 0.05) dark += `M${px} ${(floor - 362).toFixed(1)}V124`;
    }
    let h = '';
    for (let i = 1; i < 7; i++) h += `M0 ${(i * 17.57 + 1).toFixed(1)}H455`;
    let v = '', vd = '';
    for (let i = 1; i < 12; i++) {
      const x = Math.round(i * 37.95) - 0.5;
      if (i > 2 && i < 8) vd += `M${x} 0V124`; else v += `M${x} 0V124`;
    }
    this.shadowRoot.innerHTML = `
      <style>
        :host { display: block; position: relative; width: 455px; height: 124px; background: #000; font-size: 9px; }
        svg { display: block; }
        .leg { position: absolute; left: 1px; top: 0; white-space: pre; }
      </style>
      <svg width="455" height="124" viewBox="0 0 455 124">
        <path d="${h}" stroke="#505050"/><path d="${v}" stroke="#555"/><path d="${vd}" stroke="#2c2c2c"/>
        <path d="${spike}" stroke="#06456e"/>
        <path d="${dark}" stroke="#8a8a8a"/>
        <path d="${red}" stroke="#ff3434"/>
        <path d="${blue}" stroke="#0a7ac0"/>
        <path d="${white}" stroke="#fff"/>
      </svg>
      <div class="leg"><span style="color:#fff">Speed</span> <span style="color:#0768ad">Original Wind</span> <span style="color:#ff2222">Analyzed Wind</span></div>
    `;
  }
}
customElements.define('wind-plot', WindPlot);

class YAxis extends HTMLElement {
  constructor() {
    super();
    this.attachShadow({ mode: 'open' });
    const vals = this.getAttribute('values').split(',');
    this.shadowRoot.innerHTML = `
      <style>
        :host { display: flex; flex-direction: column; justify-content: space-between; align-items: flex-end; width: 21px; font-size: 9px; color: #444; }
        div { display: flex; align-items: center; height: 10px; }
        div::after { content: ""; width: 5px; height: 1px; background: #555; margin-left: 1px; }
      </style>
      ${vals.map(v => `<div>${v}</div>`).join('')}
    `;
  }
}
customElements.define('y-axis', YAxis);

class PlotPanel extends HTMLElement {
  constructor() {
    super();
    this.attachShadow({ mode: 'open' });
    const elev = [70, 60, 50, 40, 30, 20, 10, 0, -10, -20, -30, -40, -50].join(',');
    const wind = [70, 60, 50, 40, 30, 20, 10, 0].join(',');
    const times = ['00:00', '00:10', '00:20', '00:30', '00:40', '00:50', '01:00', '01:10', '01:20', '01:30', '01:40', '01:50', '02:00'];
    const arrow = (d) => `<svg width="8" height="8" viewBox="0 0 8 8"><path d="${d}" fill="#777"/></svg>`;
    this.shadowRoot.innerHTML = `
      <style>
        :host { display: block; width: 519px; height: 442px; margin: 2px 0 0 9px; background: #f7f7f7; border: 1px solid #ececec; box-sizing: border-box; font-size: 9px; color: #333; }
        .inner { margin-left: 3px; width: 513px; height: 410px; background: #f5f5f5; border: 1px solid #d6d6d6; border-bottom: 0; box-sizing: border-box; }
        .top { display: flex; height: 396px; }
        .plots { width: 499px; padding-top: 12px; box-sizing: border-box; }
        .row { display: flex; }
        .row + .row { margin-top: 6px; }
        .ylab { width: 13px; margin-left: 5px; writing-mode: vertical-rl; transform: rotate(180deg); text-align: center; color: #444; font-size: 9px; height: 100%; }
        .ylab.w { margin-left: 9px; margin-right: -4px; }
        y-axis.e { height: 256px; margin-top: -4px; }
        y-axis.w { height: 134px; margin-top: -4px; }
        .vbar { width: 13px; margin-top: 6px; height: 390px; background: #bdbdbd; display: flex; flex-direction: column; justify-content: space-between; }
        .btn { width: 13px; height: 13px; background: #c9c9c9; border: 1px solid #a8a8a8; box-sizing: border-box; display: flex; align-items: center; justify-content: center; }
        .hbar { display: flex; justify-content: space-between; width: 499px; height: 12px; margin-left: 1px; background: #b2b2b2; }
        .hbar .btn { height: 12px; }
        .ticks { display: flex; padding-left: 24px; }
        .ticks div { width: 37.95px; flex: none; display: flex; flex-direction: column; align-items: center; }
        .ticks i { display: block; width: 1px; height: 5px; margin: 2px 0 1px; background: #444; }
        .tm { text-align: center; padding-left: 41px; color: #222; margin-top: 1px; }
      </style>
      <div class="inner">
        <div class="top">
          <div class="plots">
            <div class="row" style="height:248px">
              <div class="ylab">Elevation (m)</div>
              <y-axis class="e" values="${elev}"></y-axis>
              <elevation-plot></elevation-plot>
            </div>
            <div class="row" style="height:124px">
              <div class="ylab w">Speed (km/h)</div>
              <y-axis class="w" values="${wind}"></y-axis>
              <wind-plot></wind-plot>
            </div>
          </div>
          <div class="vbar">
            <div class="btn">${arrow('M4 1L7 7H1Z')}</div>
            <div class="btn">${arrow('M1 1H7L4 7Z')}</div>
          </div>
        </div>
        <div class="hbar">
          <div class="btn">${arrow('M1 4L7 1V7Z')}</div>
          <div class="btn">${arrow('M1 1L7 4L1 7Z')}</div>
        </div>
      </div>
      <div class="ticks">${times.map(t => `<div><i></i><span>${t}</span></div>`).join('')}</div>
      <div class="tm">Time</div>
    `;
  }
}
customElements.define('plot-panel', PlotPanel);

class PlotControls extends HTMLElement {
  constructor() {
    super();
    this.attachShadow({ mode: 'open' });
    this.shadowRoot.innerHTML = `
      <style>
        :host { display: flex; margin: 13px 0 0 8px; font-size: 9px; }
        .left { width: 233px; }
        .sel { display: flex; }
        .tilt { width: 79px; height: 15px; margin: 17px 0 0 81px; }
        .chk { width: 106px; margin-left: 17px; padding-top: 1px; box-sizing: border-box; }
        .rad { width: 166px; height: 44px; box-sizing: border-box; border: 1px solid #dedede; padding: 1px 0 0 2px; }
      </style>
      <div class="left">
        <div class="sel">
          <win-select style="width:54px">metric</win-select>
          <win-select style="width:44px;margin-left:7px">time</win-select>
          <win-select style="width:77px;margin-left:7px">Full Ride</win-select>
          <win-button style="width:37px;height:16px;margin-left:6px">Fit Plots</win-button>
        </div>
        <win-button class="tilt">Show Tilt Plot</win-button>
      </div>
      <div class="chk">
        <win-check>Drafting In This Ride</win-check>
        <win-check>Wind Changed</win-check>
        <win-check disabled>Ride Has Out &amp; Back</win-check>
        <win-check disabled>Ride Has Laps</win-check>
      </div>
      <div class="rad">
        <win-radio checked>Ride Ended Where it Began</win-radio>
        <win-radio disabled>Selection Ends &amp; Starts at Same Place</win-radio>
        <win-radio>Enter Known Elevation</win-radio>
      </div>
    `;
  }
}
customElements.define('plot-controls', PlotControls);

class RideSummary extends HTMLElement {
  constructor() {
    super();
    this.attachShadow({ mode: 'open' });
    this.shadowRoot.innerHTML = `
      <style>
        :host { display: block; margin-left: 2px; width: 178px; box-sizing: border-box; background: #fff; border: 1px solid #e6e6e6; padding: 3.5px 0 0 3.7px; overflow: hidden; }
        pre { margin: 0; font: 8.6px/10.43px "Liberation Mono", monospace; color: #333; }
      </style>
      <pre><slot></slot></pre>
    `;
  }
}
customElements.define('ride-summary', RideSummary);

class AnalyzeDialog extends HTMLElement {
  constructor() {
    super();
    this.attachShadow({ mode: 'open' });
    this.shadowRoot.innerHTML = `
      <style>
        :host { display: flex; flex-direction: column; position: absolute; left: 258px; top: 70px; width: 740px; height: 542px; box-sizing: border-box; background: #f0f0f0; border: 1px solid #9a9a9a; box-shadow: 0 0 6px rgba(0,0,0,.35); font-size: 9px; }
        .tb { display: flex; align-items: center; height: 22px; background: #fff; flex: none; padding-left: 6px; color: #222; font-size: 9.2px; }
        .tb span { margin-left: 4px; flex: 1; }
        .tb svg { display: block; }
        .ctl { display: flex; align-items: center; }
        .ctl div { width: 34px; display: flex; justify-content: center; }
        .body { display: flex; flex: 1; min-height: 0; position: relative; }
        .main { width: 549px; flex: none; border-right: 1px solid #a8a8a8; box-sizing: border-box; background: linear-gradient(90deg,#f0f0f0 529px,#fbfbfb 529px,#fbfbfb 537px,#c8c8c8 541px,#f0f0f0 544px); }
        .side { flex: 1; font-size: 9.2px; color: #333; }
        .lab { height: 9px; line-height: 9px; padding: 6px 0 4px 3px; }
        .lab.aft { padding: 5px 0 5px 3px; }
        .sep { height: 1px; background: #c8c8c8; margin-top: 2px; }
        .act { display: flex; margin-top: 8px; }
        .grp { width: 106px; height: 41px; margin-left: 9px; border: 1px solid #dedede; box-sizing: border-box; }
        .grp win-button { width: 54px; height: 16px; margin: 5px 0 4px 22px; }
        .cks { display: flex; gap: 6px; padding-left: 3px; }
        .can { width: 54px; height: 17px; margin: 5px 0 0 8px; }
        .mark { position: absolute; display: block; }
      </style>
      <div class="tb">${LOGO(10, 10)}<span>Analyze Route</span>
        <div class="ctl">
          <div><svg width="11" height="2" viewBox="0 0 11 2"><path d="M0 1H11" stroke="#cfcfcf"/></svg></div>
          <div><svg width="9" height="9" viewBox="0 0 9 9"><rect x=".5" y=".5" width="8" height="8" fill="none" stroke="#222"/></svg></div>
          <div><svg width="9" height="9" viewBox="0 0 9 9"><path d="M.5 .5L8.5 8.5M8.5 .5L.5 8.5" stroke="#222"/></svg></div>
        </div>
      </div>
      <div class="body">
        <div class="main">
          <plot-panel></plot-panel>
          <plot-controls></plot-controls>
        </div>
        <div class="side">
          <div class="lab">Original Download</div>
          <ride-summary style="height:214px"><slot name="before"></slot></ride-summary>
          <div class="lab aft">After</div>
          <ride-summary style="height:211px;padding-top:2.8px"><slot name="after"></slot></ride-summary>
          <div class="sep"></div>
          <div class="act">
            <div class="grp">
              <win-button>Accept</win-button>
              <div class="cks"><win-check checked>Laps</win-check><win-check checked>Annotations</win-check></div>
            </div>
            <win-button class="can">Cancel</win-button>
          </div>
        </div>
        <svg class="mark" style="left:557px;top:93px" width="160" height="5" viewBox="0 0 160 5"><path d="M1 3C40 2.2 110 2.6 158 2" stroke="#e41e1e" stroke-width="3.4" stroke-linecap="round" fill="none"/></svg>
        <svg class="mark" style="left:545px;top:325px" width="182" height="6" viewBox="0 0 182 6"><path d="M1 3.4C50 4 120 3.6 180 2.6" stroke="#e41e1e" stroke-width="3.2" stroke-linecap="round" fill="none"/></svg>
      </div>
    `;
  }
}
customElements.define('analyze-dialog', AnalyzeDialog);

const COMMON_TAIL = `Cadence     0   95.4   150  rpm
HR         95  160.5   183  bpm`;
const BEFORE = `Distance:   49.15 km (1:50:25)
Energy:    1683.8 kJ
Cals Burn: 1609.8 kcal
Climbing:     884 m
Braking:   -219.4 kJ (-13.0%)
          Min   Avg    Max
Power       0  254.2   710   W
Aero        0  122.5  1080   W
Rolling     0   58.7   143   W
Gravity -2193   -0.5   782   W
Speed     0.0   26.7  65.5  km/h
Wind      0.0   28.4  63.1  km/h
Elev      -34     28    69  m
Slope   -16.0  -0.01  18.2  %
${COMMON_TAIL}
NP:312W IF:1.11 TSS:228 VI:1.23
CdA: 0.360 m^2; Crr: 0.0086
94 kg; 22/08/2021 1:58 PM
26 degC; 1013 hPa`;
const AFTER = `Distance:   49.15 km (1:50:25)
Energy:    1604.6 kJ
Cals Burn: 1534.1 kcal
Climbing:     940 m
Braking:   -225.4 kJ (-14.0%)
          Min   Avg    Max
Power       0  242.2   699   W
Aero        0  116.8  1062   W
Rolling     0   58.7   143   W
Gravity -2253    1.4   792   W
Speed     0.0   26.7  65.5  km/h
Wind      0.0   27.1  62.6  km/h
Elev      -40     23    66  m
Slope   -16.8   0.02  17.8  %
${COMMON_TAIL}
NP:295W IF:1.05 TSS:205 VI:1.22
CdA: 0.360 m^2; Crr: 0.0086
94 kg; 22/08/2021 1:58 PM
26 degC; 1013 hPa`;

class IsaacApp extends HTMLElement {
  constructor() {
    super();
    this.attachShadow({ mode: 'open' });
    this.shadowRoot.innerHTML = `
      <style>
        :host { display: block; position: relative; width: 1024px; height: 644px; overflow: hidden; background: #f0f0f0; font-family: Roboto, sans-serif; }
        .rule { height: 3px; background: #565656; }
        .split { display: flex; height: 579px; }
      </style>
      <title-bar></title-bar>
      <menu-bar></menu-bar>
      <tool-bar></tool-bar>
      <div class="rule"></div>
      <div class="split">
        <left-pane></left-pane>
        <back-plots></back-plots>
      </div>
      <analyze-dialog>
        <span slot="before">${BEFORE}</span>
        <span slot="after">${AFTER}</span>
      </analyze-dialog>
    `;
  }
}
customElements.define('isaac-app', IsaacApp);
</script>
</body>
</html>
